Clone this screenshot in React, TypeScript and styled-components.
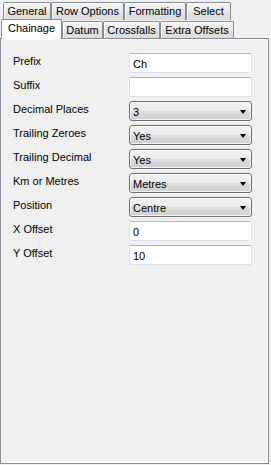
import { Fragment } from "react";
import styled, { createGlobalStyle } from "styled-components";

const GlobalStyle = createGlobalStyle`
  html, body {
    margin: 0;
    padding: 0;
    background: #f0f0f0;
  }
  * {
    box-sizing: border-box;
  }
`;

const SWindow = styled.div`
  width: 271px;
  height: 465px;
  padding-top: 2px;
  display: flex;
  flex-direction: column;
  background: #f0f0f0;
  font-family: "Liberation Sans", Arial, sans-serif;
  font-size: 11px;
  color: #000;
`;

const STabRow = styled.div<{ $first?: boolean }>`
  display: flex;
  align-items: flex-end;
  height: ${({ $first }) => ($first ? "18px" : "17px")};
  margin-top: ${({ $first }) => ($first ? "0" : "1px")};
  padding-left: ${({ $first }) => ($first ? "3px" : "1px")};
`;

const STab = styled.div<{ $w: number; $selected?: boolean }>`
  position: relative;
  width: ${({ $w }) => $w}px;
  height: ${({ $selected }) => ($selected ? "20px" : "100%")};
  margin-bottom: ${({ $selected }) => ($selected ? "-1px" : "0")};
  z-index: ${({ $selected }) => ($selected ? 2 : 1)};
  display: flex;
  justify-content: center;
  align-items: ${({ $selected }) => ($selected ? "flex-start" : "center")};
  padding-top: ${({ $selected }) => ($selected ? "2px" : "0")};
  border: 1px solid #898c95;
  border-bottom: none;
  border-radius: 2px 2px 0 0;
  background: ${({ $selected }) =>
    $selected
      ? "#fcfcfc"
      : "linear-gradient(#f5f5f5 0%, #ececec 50%, #e3e3e3 51%, #dcdcdc 100%)"};
  box-shadow: ${({ $selected }) =>
    $selected ? "none" : "inset 1px 1px 0 #fcfcfc"};
  white-space: nowrap;
  line-height: 13px;
`;

const SPanel = styled.div`
  width: 269px;
  height: 426px;
  border: 1px solid #898c95;
  background: #f0f0f0;
  box-shadow: inset 1px 1px 0 #fafafa, inset -1px -1px 0 #fafafa;
  padding: 14px 0 0 12px;
`;

const SForm = styled.div`
  display: grid;
  grid-template-columns: 116px 123px;
  grid-auto-rows: 20px;
  row-gap: 4px;
`;

const SLabel = styled.div`
  line-height: 14px;
  padding-top: 1px;
  white-space: nowrap;
`;

const STextBox = styled.div`
  height: 20px;
  border: 1px solid #dcdfe5;
  border-top-color: #b5b8c0;
  border-radius: 2px;
  background: #fff;
  padding: 4px 0 0 3px;
  line-height: 13px;
`;

const SCombo = styled.div`
  height: 20px;
  display: flex;
  align-items: center;
  justify-content: space-between;
  border: 1px solid #707070;
  border-radius: 3px;
  background: linear-gradient(#f2f2f2 0%, #ebebeb 50%, #dddddd 51%, #cfcfcf 100%);
  box-shadow: inset 1px 1px 0 #fcfcfc, inset -1px -1px 0 #f3f3f3;
  padding: 2px 5px 0 3px;
  line-height: 13px;
`;

const SArrow = styled.span`
  width: 0;
  height: 0;
  border-left: 3.5px solid transparent;
  border-right: 3.5px solid transparent;
  border-top: 4px solid #000;
  margin-top: -1px;
`;

type Field = { label: string; value: string; combo?: boolean };

const topTabs = [
  { name: "General", w: 48 },
  { name: "Row Options", w: 73 },
  { name: "Formatting", w: 62 },
  { name: "Select", w: 45 },
];

const bottomTabs = [
  { name: "Chainage", w: 61, selected: true },
  { name: "Datum", w: 41 },
  { name: "Crossfalls", w: 57 },
  { name: "Extra Offsets", w: 74 },
];

const fields: Field[] = [
  { label: "Prefix", value: "Ch" },
  { label: "Suffix", value: "" },
  { label: "Decimal Places", value: "3", combo: true },
  { label: "Trailing Zeroes", value: "Yes", combo: true },
  { label: "Trailing Decimal", value: "Yes", combo: true },
  { label: "Km or Metres", value: "Metres", combo: true },
  { label: "Position", value: "Centre", combo: true },
  { label: "X Offset", value: "0" },
  { label: "Y Offset", value: "10" },
];

export default function App() {
  return (
    <>
      <GlobalStyle />
      <SWindow>
        <STabRow $first>
          {topTabs.map((t) => (
            <STab key={t.name} $w={t.w}>
              {t.name}
            </STab>
          ))}
        </STabRow>
        <STabRow>
          {bottomTabs.map((t) => (
            <STab key={t.name} $w={t.w} $selected={t.selected}>
              {t.name}
            </STab>
          ))}
        </STabRow>
        <SPanel>
          <SForm>
            {fields.map((f) => (
              <Fragment key={f.label}>
                <SLabel>{f.label}</SLabel>
                {f.combo ? (
                  <SCombo>
                    <span>{f.value}</span>
                    <SArrow />
                  </SCombo>
                ) : (
                  <STextBox>{f.value}</STextBox>
                )}
              </Fragment>
            ))}
          </SForm>
        </SPanel>
      </SWindow>
    </>
  );
}
